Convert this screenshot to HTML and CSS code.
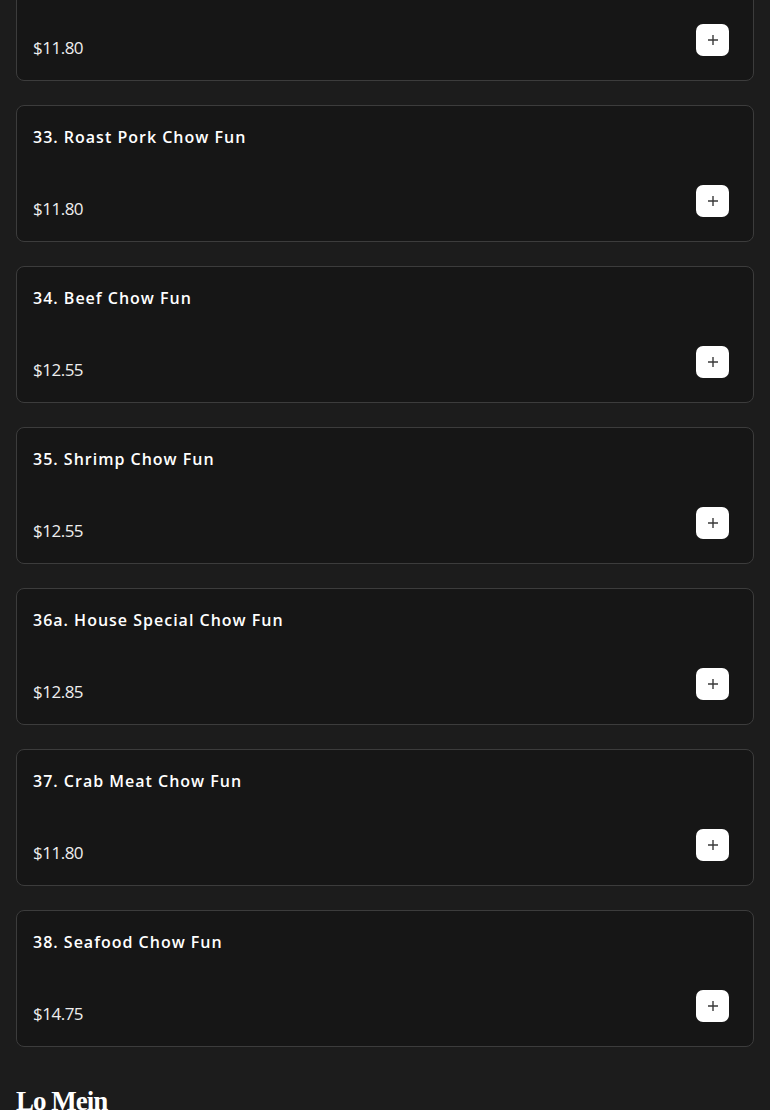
FILE: index.html
```html
<!DOCTYPE html>
<html>
  <head>
  <meta charset="UTF-8">
  <title>Menu - Chow Fun</title>
  <link rel="stylesheet" href="styles.css">
  </head>
  <body>
    <div class="menu">
      <div class="items">
        <div class="item">
          <div class="item-name">32. Chicken Chow Fun</div>
          <div class="item-bottom">
            <span class="price">$11.80</span>
            <button class="add" type="button"><svg width="12" height="12" viewBox="0 0 12 12"><path d="M6 1v10M1 6h10" stroke="#3a3a3a" stroke-width="1.4"/></svg></button>
          </div>
        </div>
        <div class="item">
          <div class="item-name">33. Roast Pork Chow Fun</div>
          <div class="item-bottom">
            <span class="price">$11.80</span>
            <button class="add" type="button"><svg width="12" height="12" viewBox="0 0 12 12"><path d="M6 1v10M1 6h10" stroke="#3a3a3a" stroke-width="1.4"/></svg></button>
          </div>
        </div>
        <div class="item">
          <div class="item-name">34. Beef Chow Fun</div>
          <div class="item-bottom">
            <span class="price">$12.55</span>
            <button class="add" type="button"><svg width="12" height="12" viewBox="0 0 12 12"><path d="M6 1v10M1 6h10" stroke="#3a3a3a" stroke-width="1.4"/></svg></button>
          </div>
        </div>
        <div class="item">
          <div class="item-name">35. Shrimp Chow Fun</div>
          <div class="item-bottom">
            <span class="price">$12.55</span>
            <button class="add" type="button"><svg width="12" height="12" viewBox="0 0 12 12"><path d="M6 1v10M1 6h10" stroke="#3a3a3a" stroke-width="1.4"/></svg></button>
          </div>
        </div>
        <div class="item">
          <div class="item-name">36a. House Special Chow Fun</div>
          <div class="item-bottom">
            <span class="price">$12.85</span>
            <button class="add" type="button"><svg width="12" height="12" viewBox="0 0 12 12"><path d="M6 1v10M1 6h10" stroke="#3a3a3a" stroke-width="1.4"/></svg></button>
          </div>
        </div>
        <div class="item">
          <div class="item-name">37. Crab Meat Chow Fun</div>
          <div class="item-bottom">
            <span class="price">$11.80</span>
            <button class="add" type="button"><svg width="12" height="12" viewBox="0 0 12 12"><path d="M6 1v10M1 6h10" stroke="#3a3a3a" stroke-width="1.4"/></svg></button>
          </div>
        </div>
        <div class="item">
          <div class="item-name">38. Seafood Chow Fun</div>
          <div class="item-bottom">
            <span class="price">$14.75</span>
            <button class="add" type="button"><svg width="12" height="12" viewBox="0 0 12 12"><path d="M6 1v10M1 6h10" stroke="#3a3a3a" stroke-width="1.4"/></svg></button>
          </div>
        </div>
      </div>
      <h2 class="section-title">Lo Mein</h2>
    </div>
  </body>
</html>
```
FILE: styles.css
```css
body {
    margin: 0;
    background: #1c1c1c;
    color: #fff;
    font-family: "Open Sans", "DejaVu Sans", sans-serif;
    overflow: hidden;
}

.menu {
    padding: 0 16px;
    margin-top: -56px;
}

.items {
    display: flex;
    flex-direction: column;
    gap: 24px;
}

.item {
    background: #161616;
    border: 1px solid #3c3c3c;
    border-radius: 8px;
    padding: 19px 24px 24px 16px;
}

.item-name {
    font-size: 16px;
    font-weight: 600;
    line-height: 24px;
    letter-spacing: 1px;
    margin-bottom: 36px;
}

.item-bottom {
    display: flex;
    justify-content: space-between;
    align-items: flex-end;
}

.price {
    font-size: 17px;
    line-height: 16px;
    letter-spacing: -0.5px;
    color: #eee;
}

.add {
    width: 33px;
    height: 32px;
    border: none;
    border-radius: 7px;
    background: #fff;
    display: flex;
    align-items: center;
    justify-content: center;
    padding: 0;
}

.section-title {
    margin: 36px 0 0;
    font-family: "Liberation Serif", serif;
    font-weight: 700;
    font-size: 27px;
    line-height: 36px;
    letter-spacing: -1px;
}
```
